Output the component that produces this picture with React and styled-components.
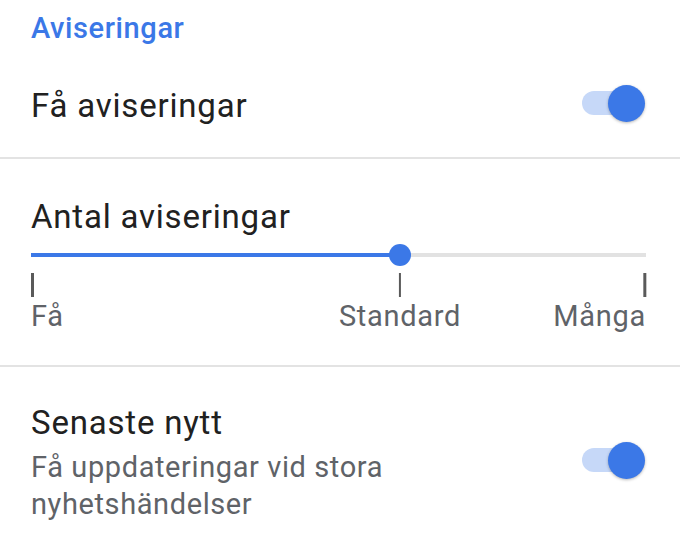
import React from "react";
import styled, { createGlobalStyle } from "styled-components";

const GlobalStyle = createGlobalStyle`
	html, body {
		margin: 0;
		padding: 0;
		background: #ffffff;
	}
	body {
		font-family: Roboto, "Liberation Sans", sans-serif;
		-webkit-font-smoothing: antialiased;
	}
`;

const BLUE = "#3b78e7";

const Page = styled.div`
	width: 680px;
	height: 544px;
	overflow: hidden;
	background: #fff;
`;

const SectionHeader = styled.h2`
	margin: 0;
	padding: 10px 34px 0 31px;
	font-size: 29px;
	line-height: 36px;
	font-weight: 500;
	letter-spacing: 0.6px;
	color: ${BLUE};
`;

const Row = styled.div`
	display: flex;
	align-items: center;
	gap: 24px;
	padding: ${(props) => props.pad || "40px 34px 31px 31px"};
	border-bottom: ${(props) => (props.divider ? "2px solid #e3e3e3" : "none")};
`;

const Column = styled.div`
	flex: 1;
	display: flex;
	flex-direction: column;
`;

const Title = styled.div`
	font-size: 33px;
	line-height: 40px;
	letter-spacing: 0.8px;
	color: #212121;
`;

const Subtitle = styled.div`
	margin-top: 6px;
	font-size: 29px;
	line-height: 37px;
	letter-spacing: 0.6px;
	color: #5f6368;
	max-width: 380px;
`;

const SwitchTrack = styled.div`
	position: relative;
	flex: none;
	width: 62px;
	height: 24px;
	margin: 0 2px 6px 0;
	border-radius: 12px;
	background: ${(props) => (props.on ? "#c6d8f8" : "#d0d0d0")};
`;

const SwitchThumb = styled.div`
	position: absolute;
	top: -6.5px;
	${(props) => (props.on ? "right: -1px;" : "left: -1px;")}
	width: 37px;
	height: 37px;
	border-radius: 50%;
	background: ${(props) => (props.on ? BLUE : "#fafafa")};
	box-shadow: 0 1px 3px rgba(0, 0, 0, 0.28);
`;

const Switch = ({ on }) => (
	<SwitchTrack on={on ? 1 : 0}>
		<SwitchThumb on={on ? 1 : 0} />
	</SwitchTrack>
);

const SliderRow = styled.div`
	padding: 38px 34px 31px 31px;
	border-bottom: 2px solid #e3e3e3;
`;

const SliderBox = styled.div`
	position: relative;
	height: 24px;
	margin-top: 6px;
	display: flex;
	align-items: center;
`;

const Rail = styled.div`
	position: relative;
	width: 100%;
	height: 4px;
	background: #e2e2e2;
`;

const Fill = styled.div`
	height: 100%;
	background: ${BLUE};
`;

const Knob = styled.div`
	position: absolute;
	top: 50%;
	width: 22px;
	height: 22px;
	border-radius: 50%;
	background: ${BLUE};
	transform: translate(-50%, -50%);
`;

const Marks = styled.div`
	position: relative;
	height: 61px;
	margin-top: 6px;
`;

const Mark = styled.div`
	position: absolute;
	top: 0;
	display: flex;
	flex-direction: column;
	align-items: ${(props) => props.align};
	transform: translateX(${(props) => props.shift});
`;

const Tick = styled.div`
	width: 2.5px;
	height: 24px;
	background: #5a5a5a;
`;

const MarkLabel = styled.div`
	margin-top: 2px;
	font-size: 29px;
	line-height: 34px;
	letter-spacing: 0.7px;
	color: #5f6368;
	white-space: nowrap;
`;

const stops = [
	{ label: "Få", at: 0, align: "flex-start", shift: "0" },
	{ label: "Standard", at: 60, align: "center", shift: "-50%" },
	{ label: "Många", at: 100, align: "flex-end", shift: "-100%" },
];

const value = 60;

export default function App() {
	return (
		<Page>
			<GlobalStyle />
			<SectionHeader>Aviseringar</SectionHeader>
			<Row divider>
				<Column>
					<Title>Få aviseringar</Title>
				</Column>
				<Switch on />
			</Row>
			<SliderRow>
				<Title>Antal aviseringar</Title>
				<SliderBox>
					<Rail>
						<Fill style={{ width: `${value}%` }} />
					</Rail>
					<Knob style={{ left: `${value}%` }} />
				</SliderBox>
				<Marks>
					{stops.map((s) => (
						<Mark
							key={s.label}
							align={s.align}
							shift={s.shift}
							style={{ left: `${s.at}%` }}
						>
							<Tick />
							<MarkLabel>{s.label}</MarkLabel>
						</Mark>
					))}
				</Marks>
			</SliderRow>
			<Row pad="36px 34px 24px 31px">
				<Column>
					<Title>Senaste nytt</Title>
					<Subtitle>Få uppdateringar vid stora nyhetshändelser</Subtitle>
				</Column>
				<Switch on />
			</Row>
		</Page>
	);
}
